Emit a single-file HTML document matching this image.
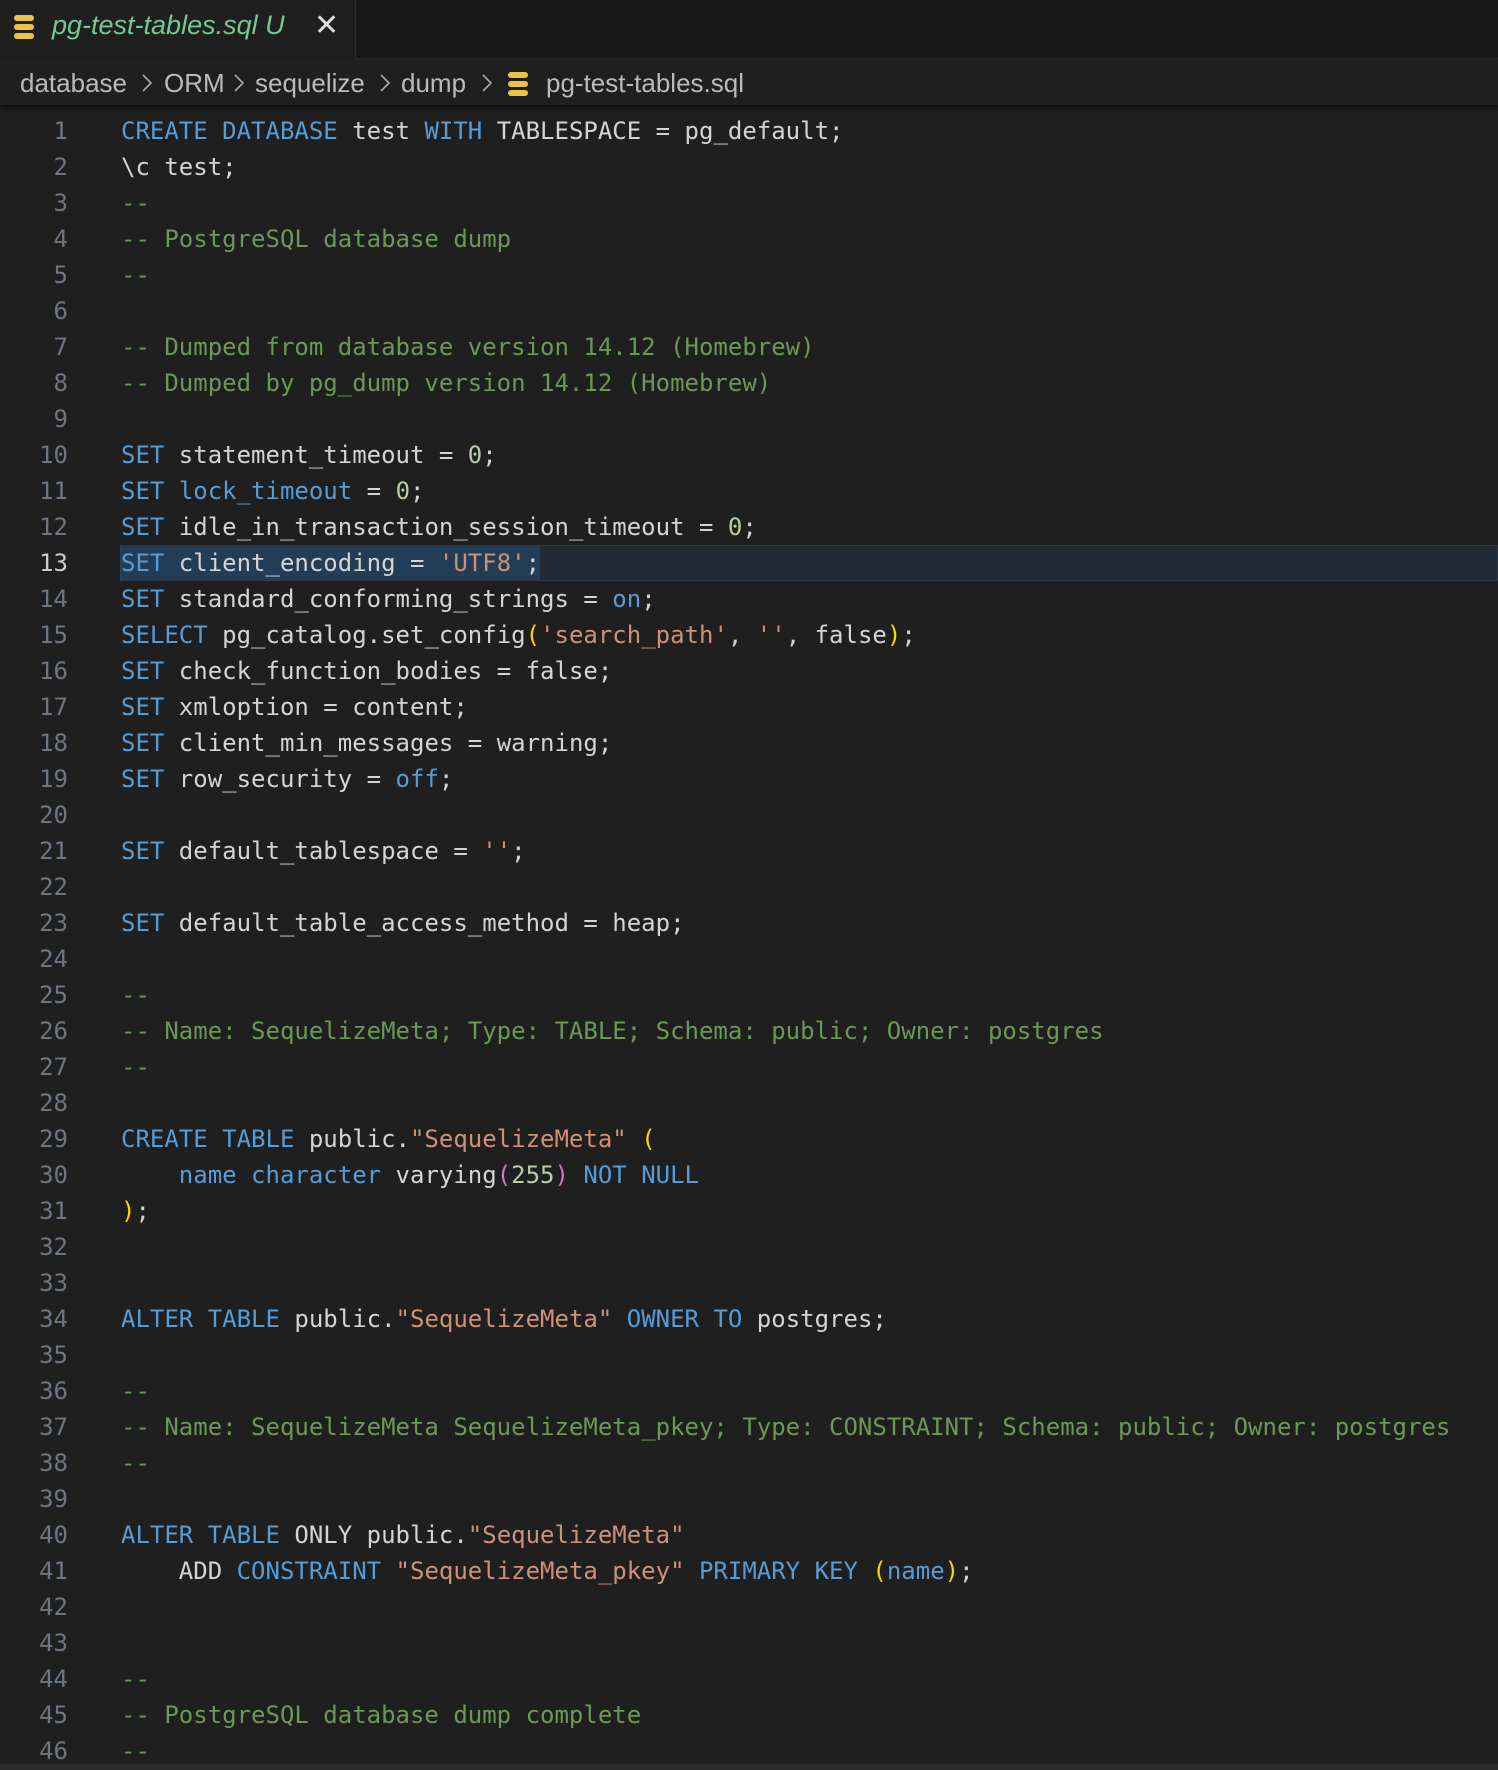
<!DOCTYPE html>
<html><head><meta charset="utf-8"><style>
*{margin:0;padding:0;box-sizing:border-box}
body{width:1498px;height:1770px;background:#1f1f1f;overflow:hidden;font-family:"DejaVu Sans Mono","Liberation Mono",monospace;position:relative}
.tabbar{position:absolute;left:0;top:0;width:1498px;height:59px;background:#181818;border-bottom:1px solid #2b2b2b}
.tab{position:absolute;left:0;top:0;width:356px;height:59px;background:#1f1f1f;border-right:1px solid #2b2b2b}
.tab .t{position:absolute;left:52px;top:10px;font:italic 27px "Liberation Sans",sans-serif;color:#73c991}
.tab .x{position:absolute;left:314px;top:8px;font:30px "Liberation Sans",sans-serif;color:#ddd}
.crumb{position:absolute;left:0;top:59px;width:1498px;height:46px;background:#1f1f1f;box-shadow:0 3px 6px #000a;font:26px "Liberation Sans",sans-serif;color:#bbb;z-index:2}
.crumb span{position:absolute;top:9px}
.crumb svg.ch{position:absolute;top:15px;width:10px;height:18px}
.db{position:absolute;width:22px;height:26px}
.code{position:absolute;left:0;top:113px;width:1498px}
.l{height:36px;line-height:36px;font-size:24px;white-space:pre;position:relative;color:#d4d4d4}
.n{position:absolute;right:1430px;color:#6e7681;text-align:right}
.c{position:absolute;left:121px}
.hl{position:absolute;left:120px;right:0;top:0;height:36px;background:#222a35;border:1px solid #2e3846}
.cur .n{color:#ccc}
.sel{position:absolute;left:120px;top:1px;width:420px;height:34px;background:#264f78;opacity:.5}
.k{color:#569cd6}.m{color:#6a9955}.s{color:#ce9178}.d{color:#b5cea8}.y{color:#ffd700}.p{color:#da70d6}
</style></head><body>
<div class="tabbar"><div class="tab">
<svg class="db" style="left:13px;top:14px" viewBox="0 0 22 26"><g fill="#e8c547"><rect x="1" y="1" width="20" height="6" rx="3"/><rect x="1" y="10" width="20" height="6" rx="3"/><rect x="1" y="19" width="20" height="6" rx="3"/></g></svg>
<div class="t">pg-test-tables.sql U</div><div class="x">✕</div></div></div>
<div class="crumb">
<span style="left:20px">database</span><svg class="ch" style="left:142px" viewBox="0 0 10 18"><path d="M1 1l8 8-8 8" stroke="#aaa" stroke-width="1.6" fill="none"/></svg>
<span style="left:164px">ORM</span><svg class="ch" style="left:234px" viewBox="0 0 10 18"><path d="M1 1l8 8-8 8" stroke="#aaa" stroke-width="1.6" fill="none"/></svg>
<span style="left:255px">sequelize</span><svg class="ch" style="left:380px" viewBox="0 0 10 18"><path d="M1 1l8 8-8 8" stroke="#aaa" stroke-width="1.6" fill="none"/></svg>
<span style="left:401px">dump</span><svg class="ch" style="left:482px" viewBox="0 0 10 18"><path d="M1 1l8 8-8 8" stroke="#aaa" stroke-width="1.6" fill="none"/></svg>
<svg class="db" style="left:507px;top:12px" viewBox="0 0 22 26"><g fill="#e8c547"><rect x="1" y="1" width="20" height="6" rx="3"/><rect x="1" y="10" width="20" height="6" rx="3"/><rect x="1" y="19" width="20" height="6" rx="3"/></g></svg>
<span style="left:546px">pg-test-tables.sql</span>
</div>
<div class="code">
<div class="l"><span class="n">1</span><span class="c"><span class="k">CREATE DATABASE</span> test <span class="k">WITH</span> TABLESPACE = pg_default;</span></div>
<div class="l"><span class="n">2</span><span class="c">\c test;</span></div>
<div class="l"><span class="n">3</span><span class="c m">--</span></div>
<div class="l"><span class="n">4</span><span class="c m">-- PostgreSQL database dump</span></div>
<div class="l"><span class="n">5</span><span class="c m">--</span></div>
<div class="l"><span class="n">6</span></div>
<div class="l"><span class="n">7</span><span class="c m">-- Dumped from database version 14.12 (Homebrew)</span></div>
<div class="l"><span class="n">8</span><span class="c m">-- Dumped by pg_dump version 14.12 (Homebrew)</span></div>
<div class="l"><span class="n">9</span></div>
<div class="l"><span class="n">10</span><span class="c"><span class="k">SET</span> statement_timeout = <span class="d">0</span>;</span></div>
<div class="l"><span class="n">11</span><span class="c"><span class="k">SET</span> <span class="k">lock_timeout</span> = <span class="d">0</span>;</span></div>
<div class="l"><span class="n">12</span><span class="c"><span class="k">SET</span> idle_in_transaction_session_timeout = <span class="d">0</span>;</span></div>
<div class="l cur"><div class="hl"></div><div class="sel"></div><span class="n">13</span><span class="c"><span class="k">SET</span> client_encoding = <span class="s">'UTF8'</span>;</span></div>
<div class="l"><span class="n">14</span><span class="c"><span class="k">SET</span> standard_conforming_strings = <span class="k">on</span>;</span></div>
<div class="l"><span class="n">15</span><span class="c"><span class="k">SELECT</span> pg_catalog.set_config<span class="y">(</span><span class="s">'search_path'</span>, <span class="s">''</span>, false<span class="y">)</span>;</span></div>
<div class="l"><span class="n">16</span><span class="c"><span class="k">SET</span> check_function_bodies = false;</span></div>
<div class="l"><span class="n">17</span><span class="c"><span class="k">SET</span> xmloption = content;</span></div>
<div class="l"><span class="n">18</span><span class="c"><span class="k">SET</span> client_min_messages = warning;</span></div>
<div class="l"><span class="n">19</span><span class="c"><span class="k">SET</span> row_security = <span class="k">off</span>;</span></div>
<div class="l"><span class="n">20</span></div>
<div class="l"><span class="n">21</span><span class="c"><span class="k">SET</span> default_tablespace = <span class="s">''</span>;</span></div>
<div class="l"><span class="n">22</span></div>
<div class="l"><span class="n">23</span><span class="c"><span class="k">SET</span> default_table_access_method = heap;</span></div>
<div class="l"><span class="n">24</span></div>
<div class="l"><span class="n">25</span><span class="c m">--</span></div>
<div class="l"><span class="n">26</span><span class="c m">-- Name: SequelizeMeta; Type: TABLE; Schema: public; Owner: postgres</span></div>
<div class="l"><span class="n">27</span><span class="c m">--</span></div>
<div class="l"><span class="n">28</span></div>
<div class="l"><span class="n">29</span><span class="c"><span class="k">CREATE TABLE</span> public.<span class="s">"SequelizeMeta"</span> <span class="y">(</span></span></div>
<div class="l"><span class="n">30</span><span class="c">    <span class="k">name</span> <span class="k">character</span> varying<span class="p">(</span><span class="d">255</span><span class="p">)</span> <span class="k">NOT NULL</span></span></div>
<div class="l"><span class="n">31</span><span class="c"><span class="y">)</span>;</span></div>
<div class="l"><span class="n">32</span></div>
<div class="l"><span class="n">33</span></div>
<div class="l"><span class="n">34</span><span class="c"><span class="k">ALTER TABLE</span> public.<span class="s">"SequelizeMeta"</span> <span class="k">OWNER TO</span> postgres;</span></div>
<div class="l"><span class="n">35</span></div>
<div class="l"><span class="n">36</span><span class="c m">--</span></div>
<div class="l"><span class="n">37</span><span class="c m">-- Name: SequelizeMeta SequelizeMeta_pkey; Type: CONSTRAINT; Schema: public; Owner: postgres</span></div>
<div class="l"><span class="n">38</span><span class="c m">--</span></div>
<div class="l"><span class="n">39</span></div>
<div class="l"><span class="n">40</span><span class="c"><span class="k">ALTER TABLE</span> ONLY public.<span class="s">"SequelizeMeta"</span></span></div>
<div class="l"><span class="n">41</span><span class="c">    ADD <span class="k">CONSTRAINT</span> <span class="s">"SequelizeMeta_pkey"</span> <span class="k">PRIMARY KEY</span> <span class="y">(</span><span class="k">name</span><span class="y">)</span>;</span></div>
<div class="l"><span class="n">42</span></div>
<div class="l"><span class="n">43</span></div>
<div class="l"><span class="n">44</span><span class="c m">--</span></div>
<div class="l"><span class="n">45</span><span class="c m">-- PostgreSQL database dump complete</span></div>
<div class="l"><span class="n">46</span><span class="c m">--</span></div>
</div>
<div style="position:absolute;left:0;top:1764px;width:1498px;height:6px;background:#2a2a2a"></div>
</body></html>
